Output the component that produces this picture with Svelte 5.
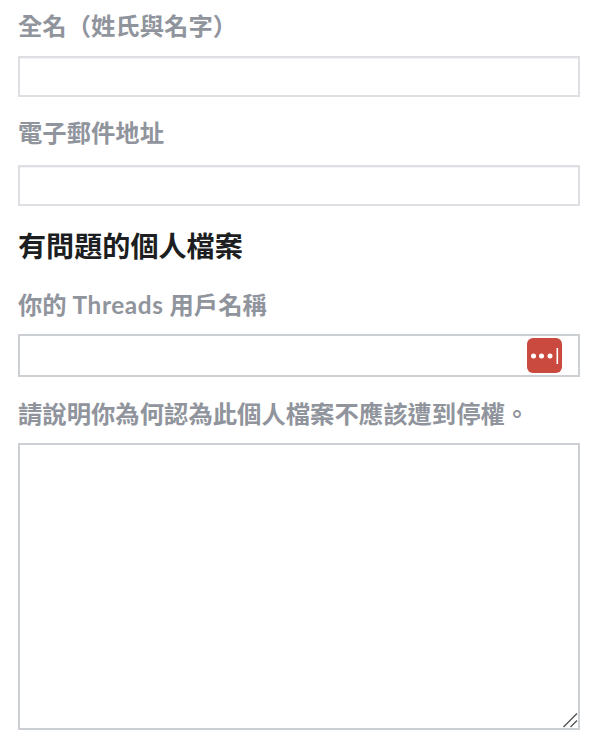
<script>
    let fullName = '';
    let email = '';
    let username = '';
    let reason = '';
</script>

<form class="form">
    <label class="field first">
        <span class="label">全名（姓氏與名字）</span>
        <input class="light" type="text" bind:value={fullName} />
    </label>

    <label class="field second">
        <span class="label">電子郵件地址</span>
        <input class="light" type="text" bind:value={email} />
    </label>

    <h2>有問題的個人檔案</h2>

    <label class="field third">
        <span class="label">你的 <span class="latin">Threads</span> 用戶名稱</span>
        <div class="input-wrap">
            <input type="text" bind:value={username} />
            <span class="pw-icon">
                <svg width="35" height="35" viewBox="0 0 35 35">
                    <rect width="35" height="35" rx="6" fill="#cb4a40" />
                    <circle cx="6.5" cy="18" r="2.5" fill="#fff" />
                    <circle cx="14.5" cy="18" r="2.5" fill="#fff" />
                    <circle cx="23" cy="18" r="2.5" fill="#fff" />
                    <rect x="29.5" y="10" width="1.6" height="16" fill="#fff" />
                </svg>
            </span>
        </div>
    </label>

    <label class="field fourth">
        <span class="label">請說明你為何認為此個人檔案不應該遭到停權。</span>
        <div class="area-wrap">
            <textarea bind:value={reason}></textarea>
            <svg class="grip" width="16" height="16" viewBox="0 0 16 16">
                <path d="M1.5 15 L15 1.5 M8.5 15 L15 8.5" stroke="#555" stroke-width="1.4" fill="none" />
            </svg>
        </div>
    </label>
</form>

<style>
    :global(body) {
        background: #fff;
    }
    .form {
        padding: 0 20px 0 18px;
        height: 745px;
        box-sizing: border-box;
        overflow: hidden;
        font-family: "Lato", "Noto Sans CJK TC", sans-serif;
    }
    .field {
        display: block;
    }
    .label {
        display: block;
        font-size: 24.35px;
        line-height: 32px;
        font-weight: 700;
        color: #90949c;
    }
    .latin {
        letter-spacing: 0.6px;
    }
    .first {
        padding-top: 10px;
    }
    .second {
        padding-top: 20px;
    }
    .third {
        padding-top: 24px;
    }
    .fourth {
        padding-top: 21px;
    }
    .first input {
        margin-top: 14px;
    }
    .second input {
        margin-top: 16px;
    }
    .input-wrap {
        position: relative;
        margin-top: 13px;
    }
    .area-wrap {
        position: relative;
        margin-top: 13px;
    }
    input, textarea {
        display: block;
        width: 100%;
        box-sizing: border-box;
        border: 2px solid #ccd0d5;
        border-radius: 0;
        background: #fff;
        outline: none;
        font: inherit;
    }
    input {
        height: 43px;
    }
    input.light {
        height: 41px;
        border-color: #dddfe2;
        box-shadow: inset 0 1px 1px #f2f2f4;
    }
    textarea {
        height: 287px;
        resize: none;
    }
    h2 {
        margin: 21px 0 0;
        font-size: 28.1px;
        line-height: 38px;
        font-weight: 700;
        color: #1c1e21;
    }
    .pw-icon {
        position: absolute;
        top: 4px;
        right: 18px;
        width: 35px;
        height: 35px;
        display: block;
    }
    .pw-icon svg {
        display: block;
    }
    .grip {
        position: absolute;
        right: 2px;
        bottom: 2px;
        pointer-events: none;
    }
</style>
